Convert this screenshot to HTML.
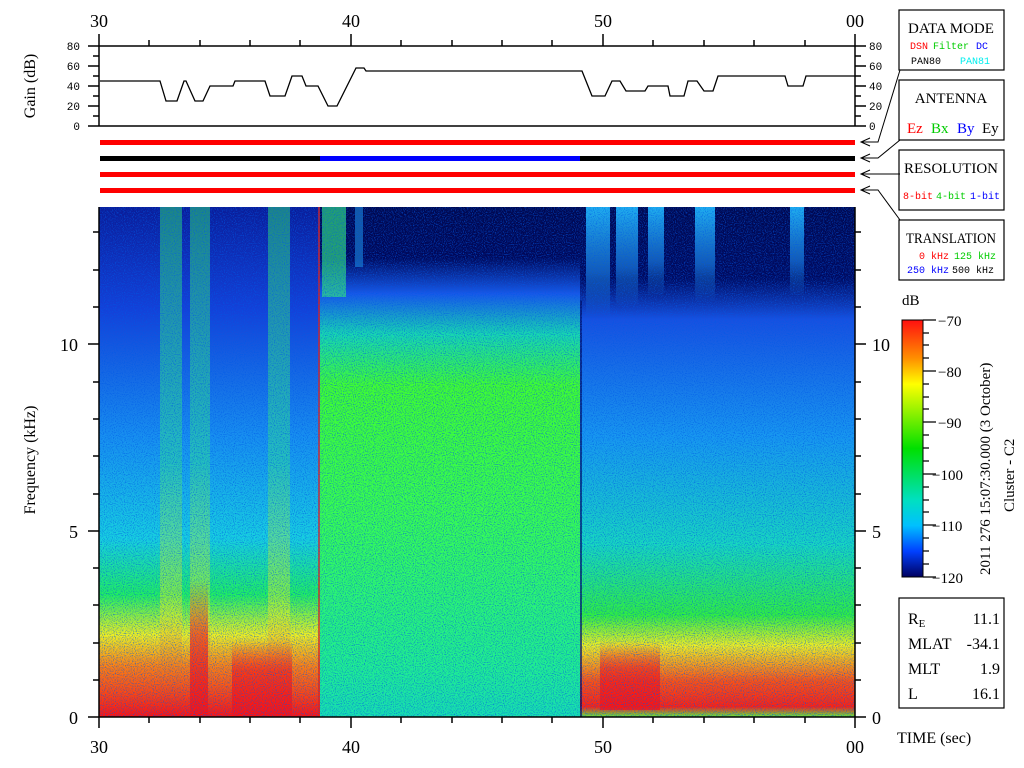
<!DOCTYPE html>
<html><head><meta charset="utf-8"><style>
html,body{margin:0;padding:0;background:#fff;}
svg{display:block;font-family:"Liberation Mono","DejaVu Sans Mono",monospace;}
.s{font-family:"Liberation Serif",serif;}
</style></head><body>
<svg width="1024" height="768" viewBox="0 0 1024 768" xmlns="http://www.w3.org/2000/svg">
<defs>
<linearGradient id="gA" x1="0" y1="0" x2="0" y2="1">
<stop offset="0" stop-color="#0a1c98"/><stop offset="0.2" stop-color="#1440d8"/>
<stop offset="0.45" stop-color="#1890f0"/><stop offset="0.65" stop-color="#18d0e0"/>
<stop offset="0.76" stop-color="#20f060"/><stop offset="0.84" stop-color="#f0f020"/>
<stop offset="0.9" stop-color="#ff8010"/><stop offset="1" stop-color="#ff1010"/></linearGradient>
<linearGradient id="gB" x1="0" y1="0" x2="0" y2="1">
<stop offset="0" stop-color="#000850"/><stop offset="0.1" stop-color="#00085a"/>
<stop offset="0.17" stop-color="#1858e8"/><stop offset="0.25" stop-color="#18d8b0"/>
<stop offset="0.35" stop-color="#40ff30"/><stop offset="0.6" stop-color="#38ff50"/>
<stop offset="0.9" stop-color="#20f090"/><stop offset="1" stop-color="#18e0b0"/></linearGradient>
<linearGradient id="gC" x1="0" y1="0" x2="0" y2="1">
<stop offset="0" stop-color="#000850"/><stop offset="0.14" stop-color="#000a60"/>
<stop offset="0.22" stop-color="#1850e0"/><stop offset="0.45" stop-color="#1898f0"/>
<stop offset="0.66" stop-color="#18d8c0"/><stop offset="0.8" stop-color="#30f040"/>
<stop offset="0.86" stop-color="#f0f020"/><stop offset="0.93" stop-color="#ff5010"/>
<stop offset="0.98" stop-color="#ff2010"/><stop offset="1" stop-color="#60f040"/></linearGradient>
<linearGradient id="gS" x1="0" y1="0" x2="0" y2="1">
<stop offset="0" stop-color="#30f070"/><stop offset="0.5" stop-color="#30e090"/>
<stop offset="0.8" stop-color="#f0f020"/><stop offset="1" stop-color="#ff1010"/></linearGradient>
<linearGradient id="gT" x1="0" y1="0" x2="0" y2="1">
<stop offset="0" stop-color="#20b0f0"/><stop offset="0.6" stop-color="#2090f0" stop-opacity="0.6"/>
<stop offset="1" stop-color="#2090f0" stop-opacity="0"/></linearGradient>
<linearGradient id="gR" x1="0" y1="0" x2="0" y2="1">
<stop offset="0" stop-color="#ff1010" stop-opacity="0"/><stop offset="0.4" stop-color="#ff1010" stop-opacity="0.6"/><stop offset="1" stop-color="#ff1010" stop-opacity="0.8"/></linearGradient>
<linearGradient id="cb" x1="0" y1="0" x2="0" y2="1">
<stop offset="0" stop-color="#ff1010"/><stop offset="0.15" stop-color="#ff9000"/>
<stop offset="0.25" stop-color="#ffff00"/><stop offset="0.5" stop-color="#00e000"/>
<stop offset="0.7" stop-color="#00e0c0"/><stop offset="0.8" stop-color="#00c0ff"/>
<stop offset="0.9" stop-color="#0040ff"/><stop offset="1" stop-color="#000060"/></linearGradient>
<filter id="nz" x="0" y="0" width="100%" height="100%">
<feTurbulence type="fractalNoise" baseFrequency="0.9" numOctaves="1" seed="3"/>
<feColorMatrix type="matrix" values="0 0 0 0 0  0 0 0 0 0.1  0 0 0 0 0.8  0 0 0 -3 1.6"/>
</filter>
</defs>

<g font-family="Liberation Serif" font-size="18" text-anchor="middle">
<text x="99" y="27">30</text><text x="351" y="27">40</text><text x="603" y="27">50</text><text x="855" y="27">00</text>
<text x="99" y="753">30</text><text x="351" y="753">40</text><text x="603" y="753">50</text><text x="855" y="753">00</text>
</g>

<g stroke="#000" stroke-width="1.5" fill="none">
<line x1="99" y1="46" x2="855" y2="46"/><line x1="88" y1="126" x2="866" y2="126"/>
<line x1="99" y1="34" x2="99" y2="126"/><line x1="855" y1="34" x2="855" y2="126"/>
<line x1="351" y1="34" x2="351" y2="46"/><line x1="603" y1="34" x2="603" y2="46"/>
<line x1="149" y1="40" x2="149" y2="46"/><line x1="200" y1="40" x2="200" y2="46"/><line x1="250" y1="40" x2="250" y2="46"/><line x1="300" y1="40" x2="300" y2="46"/>
<line x1="401" y1="40" x2="401" y2="46"/><line x1="452" y1="40" x2="452" y2="46"/><line x1="502" y1="40" x2="502" y2="46"/><line x1="552" y1="40" x2="552" y2="46"/>
<line x1="653" y1="40" x2="653" y2="46"/><line x1="704" y1="40" x2="704" y2="46"/><line x1="754" y1="40" x2="754" y2="46"/><line x1="805" y1="40" x2="805" y2="46"/>
<line x1="88" y1="46" x2="99" y2="46"/><line x1="93" y1="56" x2="99" y2="56"/><line x1="88" y1="66" x2="99" y2="66"/><line x1="93" y1="76" x2="99" y2="76"/><line x1="88" y1="86" x2="99" y2="86"/><line x1="93" y1="96" x2="99" y2="96"/><line x1="88" y1="106" x2="99" y2="106"/><line x1="93" y1="116" x2="99" y2="116"/>
<line x1="855" y1="46" x2="866" y2="46"/><line x1="855" y1="56" x2="861" y2="56"/><line x1="855" y1="66" x2="866" y2="66"/><line x1="855" y1="76" x2="861" y2="76"/><line x1="855" y1="86" x2="866" y2="86"/><line x1="855" y1="96" x2="861" y2="96"/><line x1="855" y1="106" x2="866" y2="106"/><line x1="855" y1="116" x2="861" y2="116"/>
</g>
<polyline fill="none" stroke="#000" stroke-width="1.3" points="100,81 160,81 166,101 177,101 184,81 186,81 195,101 203,101 210,86 233,86 235,81 265,81 270,96 285,96 292,76 302,76 306,86 318,86 328,106 337,106 356,68 364,68 366,71 582,71 592,96 605,96 612,81 620,81 626,91 645,91 648,86 668,86 670,96 684,96 688,81 697,81 704,91 713,91 718,76 785,76 788,86 803,86 806,76 855,76"/>
<g font-size="11" text-anchor="end">
<text x="80" y="50">80</text><text x="80" y="70">60</text><text x="80" y="90">40</text><text x="80" y="110">20</text><text x="80" y="130">0</text>
</g>
<g font-size="11">
<text x="869" y="50">80</text><text x="869" y="70">60</text><text x="869" y="90">40</text><text x="869" y="110">20</text><text x="869" y="130">0</text>
</g>
<text class="s" font-size="16" transform="translate(35,86) rotate(-90)" text-anchor="middle">Gain (dB)</text>

<rect x="100" y="140" width="755" height="5" fill="#f00"/>
<rect x="100" y="156" width="220" height="5" fill="#000"/>
<rect x="320" y="156" width="260" height="5" fill="#00f"/>
<rect x="580" y="156" width="275" height="5" fill="#000"/>
<rect x="100" y="172" width="755" height="5" fill="#f00"/>
<rect x="100" y="188" width="755" height="5" fill="#f00"/>

<g stroke="#000" stroke-width="1" fill="none">
<polyline points="870,138 861,142 870,146"/><polyline points="862,142 878,142 900,70"/>
<polyline points="870,154 861,158 870,162"/><polyline points="862,158 878,158 900,140"/>
<polyline points="870,170 861,174 870,178"/><polyline points="862,174 900,174"/>
<polyline points="870,186 861,190 870,194"/><polyline points="862,190 878,190 900,220"/>
</g>

<rect x="99" y="207" width="221" height="510" fill="url(#gA)"/>
<rect x="320" y="207" width="260" height="510" fill="url(#gB)"/>
<rect x="580" y="207" width="275" height="510" fill="url(#gC)"/>
<g opacity="0.5">
<rect x="160" y="207" width="22" height="510" fill="url(#gS)"/>
<rect x="190" y="207" width="20" height="510" fill="url(#gS)"/>
<rect x="268" y="207" width="22" height="510" fill="url(#gS)"/>
</g>
<rect x="322" y="207" width="24" height="90" fill="#30e080" opacity="0.7"/>
<rect x="355" y="207" width="8" height="60" fill="#2090e0" opacity="0.6"/>
<rect x="586" y="207" width="24" height="110" fill="url(#gT)"/>
<rect x="616" y="207" width="22" height="100" fill="url(#gT)"/>
<rect x="648" y="207" width="16" height="90" fill="url(#gT)"/>
<rect x="695" y="207" width="20" height="95" fill="url(#gT)"/>
<rect x="790" y="207" width="14" height="90" fill="url(#gT)"/>
<rect x="190" y="580" width="18" height="137" fill="url(#gR)"/>
<rect x="232" y="640" width="60" height="77" fill="url(#gR)"/>
<rect x="600" y="640" width="60" height="70" fill="url(#gR)"/>
<rect x="318" y="207" width="2" height="510" fill="#f02010" opacity="0.7"/>
<rect x="580" y="300" width="2" height="417" fill="#000a60" opacity="0.7"/>
<rect x="99" y="207" width="756" height="510" filter="url(#nz)" opacity="0.75"/>

<g stroke="#000" stroke-width="1.5" fill="none">
<line x1="99" y1="207" x2="99" y2="717"/><line x1="855" y1="207" x2="855" y2="717"/>
<line x1="88" y1="717" x2="866" y2="717"/>
<line x1="99" y1="717" x2="99" y2="728"/><line x1="351" y1="717" x2="351" y2="728"/><line x1="603" y1="717" x2="603" y2="728"/><line x1="855" y1="717" x2="855" y2="728"/>
<line x1="149" y1="717" x2="149" y2="723"/><line x1="200" y1="717" x2="200" y2="723"/><line x1="250" y1="717" x2="250" y2="723"/><line x1="300" y1="717" x2="300" y2="723"/>
<line x1="401" y1="717" x2="401" y2="723"/><line x1="452" y1="717" x2="452" y2="723"/><line x1="502" y1="717" x2="502" y2="723"/><line x1="552" y1="717" x2="552" y2="723"/>
<line x1="653" y1="717" x2="653" y2="723"/><line x1="704" y1="717" x2="704" y2="723"/><line x1="754" y1="717" x2="754" y2="723"/><line x1="805" y1="717" x2="805" y2="723"/>
<path d="M88 531H99M88 344H99M93 680H99M93 643H99M93 605H99M93 568H99M93 494H99M93 456H99M93 419H99M93 382H99M93 307H99M93 270H99M93 232H99"/>
<path d="M855 531H866M855 344H866M855 680H861M855 643H861M855 605H861M855 568H861M855 494H861M855 456H861M855 419H861M855 382H861M855 307H861M855 270H861M855 232H861"/>
</g>
<g class="s" font-size="18">
<text x="78" y="724" text-anchor="end">0</text><text x="78" y="538" text-anchor="end">5</text><text x="78" y="351" text-anchor="end">10</text>
<text x="872" y="724">0</text><text x="872" y="538">5</text><text x="872" y="351">10</text>
</g>
<text class="s" font-size="16" transform="translate(35,460) rotate(-90)" text-anchor="middle">Frequency (kHz)</text>
<text class="s" font-size="16" x="897" y="743">TIME (sec)</text>

<g fill="none" stroke="#000" stroke-width="1.2">
<rect x="899" y="10" width="105" height="60"/>
<rect x="899" y="80" width="105" height="60"/>
<rect x="899" y="150" width="105" height="60"/>
<rect x="899" y="220" width="105" height="60"/>
<rect x="899" y="598" width="105" height="110"/>
</g>
<g class="s" font-size="15" text-anchor="middle">
<text x="951" y="33">DATA MODE</text>
<text x="951" y="103">ANTENNA</text>
<text x="951" y="173" textLength="94" lengthAdjust="spacingAndGlyphs">RESOLUTION</text>
<text x="951" y="243" textLength="90" lengthAdjust="spacingAndGlyphs">TRANSLATION</text>
</g>
<g font-size="10">
<text x="910" y="49" fill="#f00">DSN</text><text x="933" y="49" fill="#0c0">Filter</text><text x="976" y="49" fill="#00f">DC</text>
<text x="911" y="64" fill="#000">PAN80</text><text x="960" y="64" fill="#0ee">PAN81</text>
<text x="903" y="199" fill="#f00">8-bit</text><text x="936" y="199" fill="#0c0">4-bit</text><text x="970" y="199" fill="#00f">1-bit</text>
<text x="919" y="259" fill="#f00">0 kHz</text><text x="954" y="259" fill="#0c0">125 kHz</text>
<text x="907" y="273" fill="#00f">250 kHz</text><text x="952" y="273" fill="#000">500 kHz</text>
</g>
<g class="s" font-size="15">
<text x="907" y="133" fill="#f00">Ez</text><text x="931" y="133" fill="#0c0">Bx</text><text x="957" y="133" fill="#00f">By</text><text x="982" y="133" fill="#000">Ey</text>
</g>

<text class="s" font-size="15" x="902" y="305">dB</text>
<rect x="902" y="320" width="21" height="257" fill="url(#cb)" stroke="#000" stroke-width="1"/>
<g stroke="#000" stroke-width="1.2">
<path d="M923 320H936M923 371H936M923 422H936M923 474H936M923 525H936M923 577H936"/>
<path d="M923 333H929M923 345H929M923 358H929M923 384H929M923 397H929M923 409H929M923 435H929M923 448H929M923 461H929M923 487H929M923 500H929M923 512H929M923 538H929M923 551H929M923 564H929"/>
</g>
<g class="s" font-size="15">
<text x="938" y="326">−70</text><text x="938" y="377">−80</text><text x="938" y="428">−90</text><text x="932" y="480">−100</text><text x="932" y="531">−110</text><text x="932" y="583">−120</text>
</g>
<text class="s" font-size="15" transform="translate(990,575) rotate(-90)">2011 276 15:07:30.000 (3 October)</text>
<text class="s" font-size="15" transform="translate(1014,512) rotate(-90)">Cluster - C2</text>

<g class="s" font-size="16">
<text x="908" y="624">R<tspan font-size="11" dy="3">E</tspan></text><text x="1000" y="624" text-anchor="end">11.1</text>
<text x="908" y="649">MLAT</text><text x="1000" y="649" text-anchor="end">-34.1</text>
<text x="908" y="674">MLT</text><text x="1000" y="674" text-anchor="end">1.9</text>
<text x="908" y="699">L</text><text x="1000" y="699" text-anchor="end">16.1</text>
</g>
</svg>
</body></html>
